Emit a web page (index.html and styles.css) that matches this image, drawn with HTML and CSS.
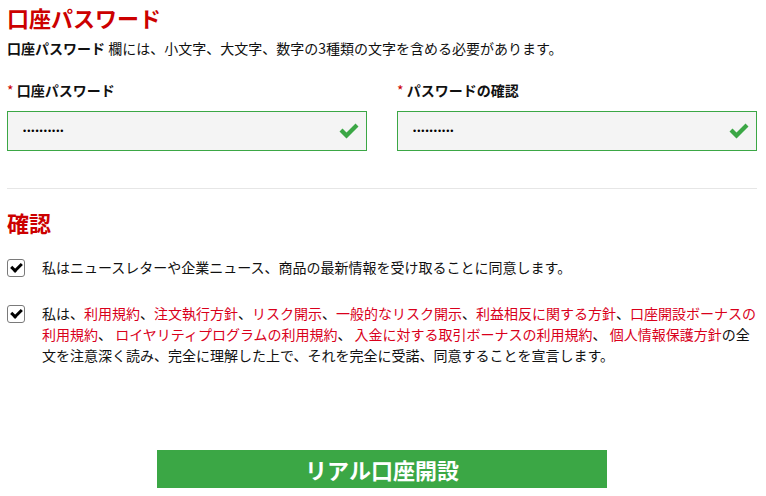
FILE: index.html
```html
<!DOCTYPE html>
<html lang="ja">
<head>
    <meta charset="UTF-8">
    <meta name="viewport" content="width=device-width, initial-scale=1.0">
    <title>口座パスワード</title>
    <link rel="stylesheet" href="styles.css">
</head>
<body>
    <div id="container">
        <h2 class="section-title">口座パスワード</h2>
        <p class="hint"><strong>口座パスワード</strong> 欄には、小文字、大文字、数字の3種類の文字を含める必要があります。</p>

        <div class="fields">
            <div class="field">
                <label class="field-label" for="password"><span class="req">*</span> 口座パスワード</label>
                <div class="input-wrap">
                    <input class="pw-input" type="password" id="password" value="abcdef1234">
                    <svg class="ok-icon" viewBox="0 0 22 16" width="22" height="16">
                        <path d="M1.5 8.5 L4.5 5.5 L8.5 9.5 L17.5 0.5 L20.5 3.5 L8.5 15.5 Z" fill="#3ba745"/>
                    </svg>
                </div>
            </div>
            <div class="field">
                <label class="field-label" for="passwordConfirm"><span class="req">*</span> パスワードの確認</label>
                <div class="input-wrap">
                    <input class="pw-input" type="password" id="passwordConfirm" value="abcdef1234">
                    <svg class="ok-icon" viewBox="0 0 22 16" width="22" height="16">
                        <path d="M1.5 8.5 L4.5 5.5 L8.5 9.5 L17.5 0.5 L20.5 3.5 L8.5 15.5 Z" fill="#3ba745"/>
                    </svg>
                </div>
            </div>
        </div>

        <hr class="divider">

        <h2 class="section-title">確認</h2>

        <label class="agree">
            <input type="checkbox" checked>
            <span class="box"></span>
            <span class="agree-text">私はニュースレターや企業ニュース、商品の最新情報を受け取ることに同意します。</span>
        </label>

        <label class="agree">
            <input type="checkbox" checked>
            <span class="box"></span>
            <span class="agree-text">私は、<a href="#">利用規約</a>、<a href="#">注文執行方針</a>、<a href="#">リスク開示</a>、<a href="#">一般的なリスク開示</a>、<a href="#">利益相反に関する方針</a>、<a href="#">口座開設ボーナスの利用規約</a>、 <a href="#">ロイヤリティプログラムの利用規約</a>、 <a href="#">入金に対する取引ボーナスの利用規約</a>、 <a href="#">個人情報保護方針</a>の全文を注意深く読み、完全に理解した上で、それを完全に受諾、同意することを宣言します。</span>
        </label>

        <div class="submit-row">
            <button class="submit-btn" type="button">リアル口座開設</button>
        </div>
    </div>
</body>
</html>
```

FILE: styles.css
```css
body {
    font-family: "Noto Sans CJK JP", "Noto Sans", sans-serif;
    font-size: 14px;
    line-height: 21px;
    color: #111;
    margin: 0;
    padding: 0;
    background: #fff;
}

#container {
    width: 750px;
    margin-left: 7px;
}

.section-title {
    font-size: 22px;
    line-height: 28px;
    font-weight: bold;
    color: #cc0000;
    margin: 3px 0 0;
}

.hint {
    margin: 7px 0 0;
}

.fields {
    display: flex;
    gap: 30px;
    margin-top: 21px;
}

.field {
    flex: 1;
}

.field-label {
    display: block;
    font-weight: bold;
}

.req {
    color: #cc0000;
    font-weight: normal;
}

.input-wrap {
    position: relative;
    margin-top: 10px;
}

.pw-input {
    box-sizing: border-box;
    width: 100%;
    height: 40px;
    border: 1px solid #3ba745;
    background: #f4f4f4;
    padding: 0 40px 0 15px;
    font-family: "Liberation Sans", sans-serif;
    font-size: 9px;
    letter-spacing: 1px;
    color: #000;
    outline: none;
}

.ok-icon {
    position: absolute;
    right: 7px;
    top: 12px;
}

.divider {
    border: 0;
    border-top: 1px solid #e6e6e6;
    margin: 37px 0 19px;
}

.divider + .section-title {
    margin-top: 0;
}

.agree {
    display: flex;
    align-items: flex-start;
    margin-top: 21px;
    cursor: pointer;
}

.agree + .agree {
    margin-top: 25px;
}

.agree input {
    display: none;
}

.box {
    flex: none;
    display: block;
    box-sizing: border-box;
    width: 18px;
    height: 18px;
    border: 1px solid #7a7a7a;
    border-radius: 3px;
    background: #fff;
    margin-top: 2px;
    margin-right: 17px;
    position: relative;
}

/* bold tick, like the one in the reference form */
.agree input:checked + .box::after {
    content: "";
    position: absolute;
    left: 5px;
    top: 1px;
    width: 4px;
    height: 8px;
    border: solid #000;
    border-width: 0 3px 3px 0;
    transform: rotate(45deg);
}

.agree-text a {
    color: #d9001b;
    text-decoration: none;
}

.submit-row {
    display: flex;
    justify-content: center;
    margin-top: 84px;
}

.submit-btn {
    width: 450px;
    height: 38px;
    border: 0;
    background: #3ba745;
    color: #fff;
    font-family: "Noto Sans CJK JP", sans-serif;
    font-size: 22px;
    font-weight: bold;
    cursor: pointer;
}
```
